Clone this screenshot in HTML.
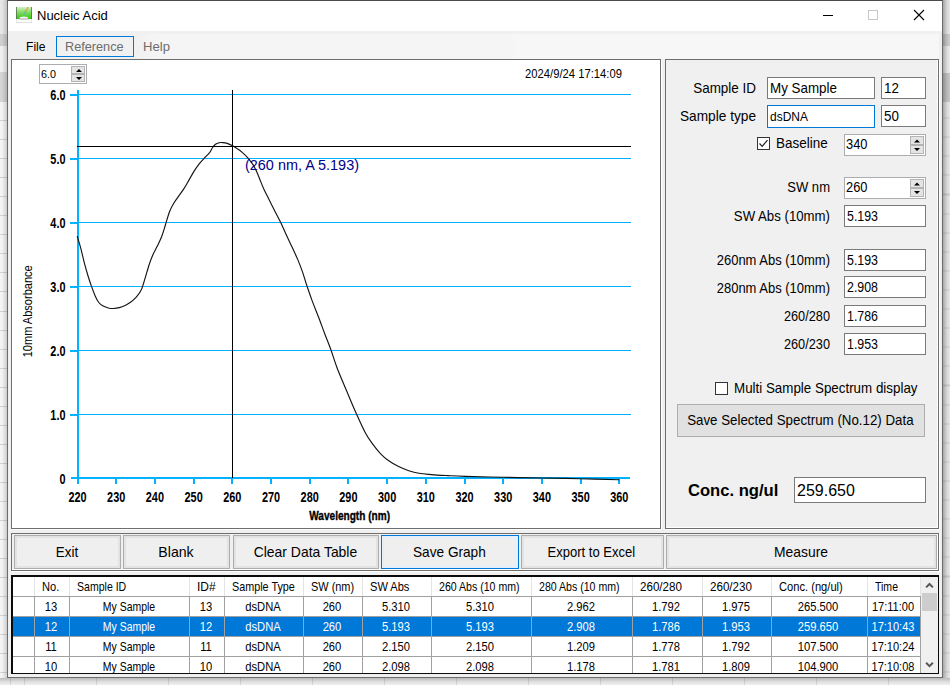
<!DOCTYPE html>
<html><head><meta charset="utf-8">
<style>
*{box-sizing:border-box;margin:0;padding:0}
html,body{width:950px;height:685px;overflow:hidden;background:#ececec;font-family:"Liberation Sans",sans-serif;color:#000}
.abs{position:absolute}
#bg{left:0;top:0;width:950px;height:685px;background:#ececec}
#bgl{left:0;top:0;width:7px;height:685px;background:
 linear-gradient(to right,rgba(0,0,0,0) 0,rgba(0,0,0,0) 2px,rgba(0,0,0,.16) 7px),
 linear-gradient(to bottom,#e6e6e6 0,#e6e6e6 34px,#cfcfcf 34px,#cfcfcf 46px,#f0f0f0 46px,#f0f0f0 72px,#d4d4d4 72px,#d4d4d4 101px,rgba(0,0,0,0) 101px),
 repeating-linear-gradient(to bottom,#d2d2d2 0,#d2d2d2 1px,#f4f4f4 1px,#f4f4f4 19.05px)}
#bgl{background-position:0 0,0 0,0 101px;background-repeat:no-repeat,no-repeat,repeat}
#bgr{left:943px;top:0;width:7px;height:685px;background:
 linear-gradient(to right,rgba(0,0,0,.28) 0,rgba(0,0,0,.08) 4px,rgba(0,0,0,0) 7px),
 linear-gradient(to bottom,#e8e8e8 0,#e8e8e8 34px,#cdcdcd 34px,#cdcdcd 46px,#ececec 46px,#ececec 73px,#c8c8c8 73px,#c8c8c8 102px,rgba(0,0,0,0) 102px),
 repeating-linear-gradient(to bottom,#cfcfcf 0,#cfcfcf 1px,#e9e9e9 1px,#e9e9e9 19.1px)}
#bgr{background-position:0 0,0 0,0 98.5px;background-repeat:no-repeat,no-repeat,repeat}
#bgb{left:0;top:678px;width:950px;height:7px;background:
 linear-gradient(to bottom,rgba(0,0,0,.22) 0,rgba(0,0,0,.06) 4px,rgba(0,0,0,0) 7px),
 repeating-linear-gradient(to right,#d6d6d6 0,#d6d6d6 1px,#efefef 1px,#efefef 72px)}
#bgb{background-position:0 0,24px 0}
#win{left:7px;top:0;width:936px;height:678px;background:#f0f0f0;border:1px solid #6b6b6b;border-top-color:#4a4a4a}
#title{left:8px;top:1px;width:934px;height:30px;background:#fff}
#menubar{left:8px;top:31px;width:934px;height:28px;background:#f0f0f0}
#menubar2{left:8px;top:34px;width:931px;height:25px;background:linear-gradient(to right,#f0f0f0 0,#f0f0f0 125px,#f5f5f5 150px,#f5f5f5 500px,#f7f7f7 510px,#f7f7f7 100%)}
.t{position:absolute;white-space:pre;line-height:1}
.panel{position:absolute;border:1px solid #6e6e6e;box-shadow:inset -1px -1px 0 #fff, 1px 1px 0 #fff}
.inp{position:absolute;background:#fff;border:1px solid #7a7a7a;font-size:14.4px;height:22px;line-height:20px;padding-left:2px;white-space:pre}
.inp span{display:inline-block;transform:scaleX(.93);transform-origin:0 50%}
.lbl{position:absolute;font-size:14.4px;white-space:pre;text-align:right;line-height:16px;transform:scaleX(.935);transform-origin:100% 50%}
.lbl.l{text-align:left;transform-origin:0 50%}
.btn{position:absolute;background:#efefef;border:1px solid #adadad;box-shadow:inset 0 0 0 2px #e3e3e3;font-size:14.4px;text-align:center;white-space:pre}
.btn span{display:inline-block;position:relative;left:-0.7px}
.spin{position:absolute;background:#fff;border:1px solid #abadb3}
.spin .b{position:absolute;right:1px;width:14px;background:#e4e4e4;border:1px solid #b4b4b4}
.cb{position:absolute;width:13px;height:13px;background:#fff;border:1px solid #333}
.tt{position:absolute;white-space:pre;font-size:12.6px;line-height:16px;height:16px;display:block}
</style></head><body>
<div id="bg" class="abs"></div>
<div id="bgl" class="abs"></div>
<div id="bgr" class="abs"></div>
<div id="bgb" class="abs"></div>
<div id="win" class="abs"></div>
<div id="title" class="abs"></div>
<div id="menubar" class="abs"></div>
<div id="menubar2" class="abs"></div>

<!-- title -->
<svg class="abs" style="left:16px;top:7px" width="16" height="16" viewBox="0 0 16 16">
 <defs><linearGradient id="g1" x1="0" y1="0" x2="0" y2="1"><stop offset="0" stop-color="#d6f2c9"/><stop offset="0.45" stop-color="#7fdc5c"/><stop offset="1" stop-color="#35c416"/></linearGradient></defs>
 <rect x="0" y="0" width="16" height="16" fill="#dcdcdc"/>
 <rect x="0" y="0" width="16" height="12" fill="#5a6a5a"/>
 <rect x="0.8" y="0" width="14.4" height="12" fill="url(#g1)"/>
 <rect x="0.6" y="12.4" width="14.8" height="2.8" fill="#fbfbfb"/>
 <ellipse cx="7.8" cy="11.4" rx="4.4" ry="1.9" fill="#f4f4f4"/>
 <path d="M3.4 12 H12.2" stroke="#8a8a8a" stroke-width="0.7"/>
 <path d="M7.4 8.6 L9 5" stroke="#4cc0cf" stroke-width="1.1"/>
 <path d="M9 5 L12.3 0.4" stroke="#e88a2e" stroke-width="1.3" stroke-dasharray="1.6 0.6"/>
</svg>
<div class="t" style="left:37px;top:9px;font-size:13px">Nucleic Acid</div>
<svg class="abs" style="left:815px;top:5px" width="120" height="22" viewBox="0 0 120 22">
 <path d="M8 10.5 H18" stroke="#000" stroke-width="1"/>
 <rect x="53.5" y="5.5" width="9" height="9" fill="none" stroke="#c8c8c8" stroke-width="1"/>
 <path d="M99 5 L109 15 M109 5 L99 15" stroke="#000" stroke-width="1.1"/>
</svg>

<!-- menu -->
<div class="t" style="left:26px;top:41px;font-size:12.1px">File</div>
<div class="abs" style="left:56px;top:36px;width:78px;height:21px;border:1px solid #0078d7;background:#f1f1f1"></div>
<div class="t" style="left:65px;top:41px;font-size:12.7px;color:#6d6d6d">Reference</div>
<div class="t" style="left:143px;top:40px;font-size:13.1px;color:#6d6d6d">Help</div>

<!-- chart panel -->
<div class="panel" style="left:11px;top:59px;width:650px;height:470px;background:#fff"></div>
<div class="spin" style="left:39px;top:64px;width:48px;height:20px">
 <div class="t" style="left:1px;top:2.5px;font-size:11.6px;transform:scaleX(.93);transform-origin:0 50%">6.0</div>
 <div class="b" style="top:1px;height:8px"></div><div class="b" style="top:9px;height:8px"></div>
 <svg class="abs" style="left:32px;top:1px" width="14" height="17" viewBox="0 0 14 17"><path d="M4 6 L7 3 L10 6 Z M4 11 L7 14 L10 11 Z" fill="#000"/></svg>
</div>
<div class="t" style="left:525px;top:67.5px;font-size:12.6px;transform:scaleX(.893);transform-origin:0 50%">2024/9/24 17:14:09</div>

<svg class="abs" style="left:12px;top:60px" width="648" height="468" viewBox="12 60 648 468">
<g fill="#00b2ff" shape-rendering="crispEdges">
<rect x="77" y="94" width="554" height="1"/>
<rect x="70" y="94" width="7" height="2"/>
<rect x="77" y="158" width="554" height="1"/>
<rect x="70" y="158" width="7" height="2"/>
<rect x="77" y="222" width="554" height="1"/>
<rect x="70" y="222" width="7" height="2"/>
<rect x="77" y="286" width="554" height="1"/>
<rect x="70" y="286" width="7" height="2"/>
<rect x="77" y="350" width="554" height="1"/>
<rect x="70" y="350" width="7" height="2"/>
<rect x="77" y="414" width="554" height="1"/>
<rect x="70" y="414" width="7" height="2"/>
<rect x="77" y="90" width="2" height="394"/>
<rect x="71" y="477" width="559" height="2"/>
<rect x="115" y="477" width="2" height="7"/>
<rect x="154" y="477" width="2" height="7"/>
<rect x="193" y="477" width="2" height="7"/>
<rect x="231" y="477" width="2" height="7"/>
<rect x="270" y="477" width="2" height="7"/>
<rect x="309" y="477" width="2" height="7"/>
<rect x="347" y="477" width="2" height="7"/>
<rect x="386" y="477" width="2" height="7"/>
<rect x="425" y="477" width="2" height="7"/>
<rect x="464" y="477" width="2" height="7"/>
<rect x="502" y="477" width="2" height="7"/>
<rect x="541" y="477" width="2" height="7"/>
<rect x="580" y="477" width="2" height="7"/>
<rect x="618" y="477" width="2" height="7"/>
</g>
<path id="curve" d="M77.2 236.1 C77.8 238.0 79.4 243.3 80.6 247.7 C81.8 252.1 83.0 257.7 84.2 262.3 C85.4 266.9 86.7 271.5 87.9 275.5 C89.1 279.5 90.3 283.0 91.5 286.4 C92.7 289.8 94.0 293.2 95.2 295.9 C96.4 298.6 97.5 300.8 98.8 302.5 C100.1 304.2 101.6 305.2 103.2 306.1 C104.8 307.0 106.6 307.6 108.3 308.0 C110.0 308.4 111.6 308.6 113.4 308.5 C115.2 308.4 117.3 308.1 119.3 307.6 C121.2 307.1 123.2 306.3 125.1 305.4 C127.0 304.5 129.1 303.3 130.9 302.0 C132.7 300.7 134.4 299.1 136.0 297.4 C137.6 295.6 139.3 293.3 140.4 291.5 C141.5 289.7 141.8 288.8 142.6 286.4 C143.4 284.0 144.4 280.5 145.5 276.9 C146.6 273.2 148.0 268.1 149.2 264.5 C150.4 260.9 151.5 258.0 152.8 255.0 C154.1 252.0 155.7 249.3 157.2 246.3 C158.7 243.3 160.2 240.4 161.6 236.8 C163.0 233.2 164.1 229.2 165.4 225.0 C166.7 220.8 168.1 215.5 169.5 211.8 C170.9 208.1 172.3 205.7 173.9 203.0 C175.5 200.3 177.3 198.1 179.0 195.7 C180.7 193.3 182.4 191.1 184.1 188.4 C185.8 185.7 187.5 182.5 189.2 179.6 C190.9 176.7 192.6 173.6 194.3 170.9 C196.0 168.2 197.7 165.8 199.4 163.6 C201.1 161.4 202.8 159.8 204.5 158.0 C206.2 156.2 208.2 154.3 209.6 152.6 C210.9 150.8 211.6 148.9 212.6 147.5 C213.6 146.1 214.4 145.1 215.5 144.3 C216.6 143.5 217.9 143.1 219.1 142.8 C220.3 142.5 221.5 142.5 222.8 142.6 C224.2 142.7 225.6 142.9 227.2 143.4 C228.8 143.9 230.9 144.9 232.6 145.8 C234.3 146.7 235.8 147.6 237.4 148.7 C239.1 149.8 240.8 151.1 242.5 152.6 C244.2 154.1 245.9 155.7 247.6 157.7 C249.3 159.7 251.3 162.1 252.8 164.4 C254.3 166.7 255.3 168.7 256.5 171.3 C257.7 173.9 258.9 177.0 260.1 180.0 C261.3 183.0 262.4 186.0 263.9 189.2 C265.4 192.4 267.2 195.8 269.0 199.4 C270.8 203.1 272.9 207.2 274.8 211.1 C276.8 214.9 278.8 218.5 280.7 222.5 C282.6 226.5 284.6 231.0 286.5 235.2 C288.4 239.4 290.4 243.4 292.3 247.6 C294.2 251.8 296.3 256.1 298.0 260.1 C299.7 264.2 301.0 267.6 302.5 271.9 C304.0 276.2 305.3 281.1 306.9 285.8 C308.5 290.6 310.1 295.2 312.0 300.4 C313.9 305.6 316.4 311.5 318.6 317.2 C320.8 322.9 323.0 329.2 325.1 334.7 C327.2 340.2 329.0 344.4 331.0 350.0 C333.0 355.6 334.6 361.3 337.3 368.5 C340.1 375.7 344.3 385.3 347.5 393.0 C350.7 400.7 353.8 408.0 356.7 414.5 C359.6 421.0 362.3 427.1 364.9 431.9 C367.4 436.7 369.4 439.5 372.0 443.1 C374.6 446.7 377.5 450.4 380.2 453.3 C382.9 456.2 385.3 458.3 388.4 460.5 C391.5 462.7 395.2 464.9 398.6 466.6 C402.0 468.3 405.4 469.6 408.8 470.7 C412.2 471.8 415.2 472.6 419.0 473.3 C422.8 474.0 426.5 474.2 431.3 474.6 C436.1 475.0 442.0 475.3 447.6 475.6 C453.2 475.9 455.8 476.1 465.0 476.4 C474.2 476.7 490.3 477.0 503.0 477.3 C515.7 477.6 528.2 477.8 541.0 478.0 C553.8 478.2 567.0 478.4 580.0 478.7 C593.0 479.0 612.8 479.5 619.3 479.7" fill="none" stroke="#141414" stroke-width="1.15" stroke-linejoin="round"/>
<rect x="232" y="90" width="1" height="388" fill="#000" shape-rendering="crispEdges"/>
<rect x="77" y="146" width="554" height="1" fill="#000" shape-rendering="crispEdges"/>
<g font-family="Liberation Sans" font-weight="700" font-size="14" fill="#000">
<text transform="translate(65.5 99.5) scale(0.78 1.06)" text-anchor="end">6.0</text>
<text transform="translate(65.5 163.5) scale(0.78 1.06)" text-anchor="end">5.0</text>
<text transform="translate(65.5 227.5) scale(0.78 1.06)" text-anchor="end">4.0</text>
<text transform="translate(65.5 291.5) scale(0.78 1.06)" text-anchor="end">3.0</text>
<text transform="translate(65.5 355.5) scale(0.78 1.06)" text-anchor="end">2.0</text>
<text transform="translate(65.5 419.5) scale(0.78 1.06)" text-anchor="end">1.0</text>
<text transform="translate(65.5 483.5) scale(0.78 1.06)" text-anchor="end">0</text>
<text transform="translate(77.5 501.5) scale(0.78 1.06)" text-anchor="middle">220</text>
<text transform="translate(116.2 501.5) scale(0.78 1.06)" text-anchor="middle">230</text>
<text transform="translate(154.9 501.5) scale(0.78 1.06)" text-anchor="middle">240</text>
<text transform="translate(193.6 501.5) scale(0.78 1.06)" text-anchor="middle">250</text>
<text transform="translate(232.3 501.5) scale(0.78 1.06)" text-anchor="middle">260</text>
<text transform="translate(271.0 501.5) scale(0.78 1.06)" text-anchor="middle">270</text>
<text transform="translate(309.7 501.5) scale(0.78 1.06)" text-anchor="middle">280</text>
<text transform="translate(348.4 501.5) scale(0.78 1.06)" text-anchor="middle">290</text>
<text transform="translate(387.1 501.5) scale(0.78 1.06)" text-anchor="middle">300</text>
<text transform="translate(425.8 501.5) scale(0.78 1.06)" text-anchor="middle">310</text>
<text transform="translate(464.5 501.5) scale(0.78 1.06)" text-anchor="middle">320</text>
<text transform="translate(503.2 501.5) scale(0.78 1.06)" text-anchor="middle">330</text>
<text transform="translate(541.9 501.5) scale(0.78 1.06)" text-anchor="middle">340</text>
<text transform="translate(580.6 501.5) scale(0.78 1.06)" text-anchor="middle">350</text>
<text transform="translate(619.3 501.5) scale(0.78 1.06)" text-anchor="middle">360</text>
</g>
<text transform="translate(349.6 519.6) scale(0.84 1)" font-family="Liberation Sans" font-weight="700" font-size="12" text-anchor="middle" stroke="#000" stroke-width="0.35">Wavelength (nm)</text>
<text transform="translate(32.2 311.3) rotate(-90) scale(0.85 1)" font-family="Liberation Sans" font-size="13" text-anchor="middle">10mm Absorbance</text>
<text x="245" y="170" font-family="Liberation Sans" font-size="14.45" fill="#00008b">(260 nm, A 5.193)</text>
</svg>

<!-- right panel -->
<div class="panel" style="left:665px;top:59px;width:274px;height:470px;background:#f0f0f0"></div>
<div class="lbl" style="left:600px;width:156px;top:80px">Sample ID</div>
<div class="inp" style="left:767px;top:77px;width:108px"><span>My Sample</span></div>
<div class="inp" style="left:881px;top:77px;width:45px"><span>12</span></div>
<div class="lbl" style="left:600px;width:156px;top:108px;transform:scaleX(0.95)">Sample type</div>
<div class="inp" style="left:767px;top:105px;width:108px;height:23px;border-color:#0078d7"><span style="font-size:13.3px;transform:scaleX(.9)">dsDNA</span></div>
<div class="inp" style="left:881px;top:105px;width:45px"><span>50</span></div>
<div class="cb" style="left:757px;top:137px"><svg width="11" height="11" viewBox="0 0 11 11" style="position:absolute;left:0;top:0"><path d="M1.5 5.5 L4.2 8.3 L9.5 2.2" fill="none" stroke="#222" stroke-width="1.2"/></svg></div>
<div class="lbl l" style="left:776px;top:135px">Baseline</div>
<div class="spin" style="left:844px;top:134px;width:82px;height:22px">
 <div class="t" style="left:1px;top:2px;font-size:14.2px;transform:scaleX(.905);transform-origin:0 50%">340</div>
 <div class="b" style="top:1px;height:9px"></div><div class="b" style="top:10px;height:9px"></div>
 <svg class="abs" style="left:65px;top:1px" width="14" height="19" viewBox="0 0 14 19"><path d="M4 6.5 L7 3.5 L10 6.5 Z M4 12 L7 15 L10 12 Z" fill="#000"/></svg>
</div>
<div class="lbl" style="left:674px;width:156px;top:179px;transform:scaleX(0.907)">SW nm</div>
<div class="spin" style="left:844px;top:177px;width:82px;height:22px">
 <div class="t" style="left:1px;top:2px;font-size:14.2px;transform:scaleX(.905);transform-origin:0 50%">260</div>
 <div class="b" style="top:1px;height:9px"></div><div class="b" style="top:10px;height:9px"></div>
 <svg class="abs" style="left:65px;top:1px" width="14" height="19" viewBox="0 0 14 19"><path d="M4 6.5 L7 3.5 L10 6.5 Z M4 12 L7 15 L10 12 Z" fill="#000"/></svg>
</div>
<div class="lbl" style="left:674px;width:156px;top:208px;transform:scaleX(0.918)">SW Abs (10mm)</div>
<div class="inp" style="left:844px;top:205px;width:82px"><span style="transform:scaleX(.86)">5.193</span></div>
<div class="lbl" style="left:674px;width:156px;top:252px;transform:scaleX(0.902)">260nm Abs (10mm)</div>
<div class="inp" style="left:844px;top:249px;width:82px"><span style="transform:scaleX(.86)">5.193</span></div>
<div class="lbl" style="left:674px;width:156px;top:280px;transform:scaleX(0.902)">280nm Abs (10mm)</div>
<div class="inp" style="left:844px;top:276px;width:82px"><span style="transform:scaleX(.86)">2.908</span></div>
<div class="lbl" style="left:674px;width:156px;top:308px;transform:scaleX(0.886)">260/280</div>
<div class="inp" style="left:844px;top:305px;width:82px"><span style="transform:scaleX(.86)">1.786</span></div>
<div class="lbl" style="left:674px;width:156px;top:336px;transform:scaleX(0.886)">260/230</div>
<div class="inp" style="left:844px;top:333px;width:82px"><span style="transform:scaleX(.86)">1.953</span></div>
<div class="cb" style="left:715px;top:382px"></div>
<div class="lbl l" style="left:734px;top:380px;transform:scaleX(0.929)">Multi Sample Spectrum display</div>
<div class="btn" style="left:677px;top:404px;width:248px;height:33px;line-height:31px;background:#e1e1e1;box-shadow:none"><span style="transform:scaleX(0.925)">Save Selected Spectrum (No.12) Data</span></div>
<div class="t" style="left:688px;top:483px;font-size:16.6px;font-weight:700">Conc. ng/ul</div>
<div class="inp" style="left:794px;top:477px;width:132px;height:26px;line-height:24px;font-size:16px"><span style="transform:none;position:relative;top:1px">259.650</span></div>

<!-- button row -->
<div class="panel" style="left:11px;top:533px;width:928px;height:38px;background:#f0f0f0"></div>
<div class="btn" style="left:14px;top:535px;width:107px;height:34px;line-height:32px"><span style="transform:scaleX(.93)">Exit</span></div>
<div class="btn" style="left:123px;top:535px;width:107px;height:34px;line-height:32px"><span style="transform:scaleX(0.98)">Blank</span></div>
<div class="btn" style="left:233px;top:535px;width:146px;height:34px;line-height:32px"><span style="transform:scaleX(0.968)">Clear Data Table</span></div>
<div class="btn" style="left:381px;top:535px;width:138px;height:34px;line-height:32px;border-color:#0078d7;box-shadow:inset 0 0 0 2px #e3effa"><span style="transform:scaleX(0.948)">Save Graph</span></div>
<div class="btn" style="left:521px;top:535px;width:143px;height:34px;line-height:32px"><span style="transform:scaleX(.905);left:-1.6px">Export to Excel</span></div>
<div class="btn" style="left:666px;top:535px;width:271px;height:34px;line-height:32px"><span style="transform:scaleX(0.964)">Measure</span></div>

<!-- table -->
<div id="tbl" class="abs" style="left:11px;top:575px;width:928px;height:99px;background:#fff;border:solid #0a0a0a;border-width:2px 1px 1px 2px;overflow:hidden">
<div class="abs" style="left:0;top:40px;width:908px;height:19px;background:#0078d7"></div>
<div class="abs" style="left:0;top:19px;width:908px;height:1px;background:#a0a0a0"></div>
<div class="abs" style="left:0;top:39px;width:908px;height:1px;background:#a0a0a0"></div>
<div class="abs" style="left:0;top:59px;width:908px;height:1px;background:#a0a0a0"></div>
<div class="abs" style="left:0;top:79px;width:908px;height:1px;background:#a0a0a0"></div>
<div class="abs" style="left:21px;top:0;width:1px;height:19px;background:#e3e3e3"></div>
<div class="abs" style="left:21px;top:19px;width:1px;height:80px;background:#a0a0a0"></div>
<div class="abs" style="left:56px;top:0;width:1px;height:19px;background:#e3e3e3"></div>
<div class="abs" style="left:56px;top:19px;width:1px;height:80px;background:#a0a0a0"></div>
<div class="abs" style="left:176px;top:0;width:1px;height:19px;background:#e3e3e3"></div>
<div class="abs" style="left:176px;top:19px;width:1px;height:80px;background:#a0a0a0"></div>
<div class="abs" style="left:211px;top:0;width:1px;height:19px;background:#e3e3e3"></div>
<div class="abs" style="left:211px;top:19px;width:1px;height:80px;background:#a0a0a0"></div>
<div class="abs" style="left:290px;top:0;width:1px;height:19px;background:#e3e3e3"></div>
<div class="abs" style="left:290px;top:19px;width:1px;height:80px;background:#a0a0a0"></div>
<div class="abs" style="left:349px;top:0;width:1px;height:19px;background:#e3e3e3"></div>
<div class="abs" style="left:349px;top:19px;width:1px;height:80px;background:#a0a0a0"></div>
<div class="abs" style="left:418px;top:0;width:1px;height:19px;background:#e3e3e3"></div>
<div class="abs" style="left:418px;top:19px;width:1px;height:80px;background:#a0a0a0"></div>
<div class="abs" style="left:518px;top:0;width:1px;height:19px;background:#e3e3e3"></div>
<div class="abs" style="left:518px;top:19px;width:1px;height:80px;background:#a0a0a0"></div>
<div class="abs" style="left:619px;top:0;width:1px;height:19px;background:#e3e3e3"></div>
<div class="abs" style="left:619px;top:19px;width:1px;height:80px;background:#a0a0a0"></div>
<div class="abs" style="left:689px;top:0;width:1px;height:19px;background:#e3e3e3"></div>
<div class="abs" style="left:689px;top:19px;width:1px;height:80px;background:#a0a0a0"></div>
<div class="abs" style="left:758px;top:0;width:1px;height:19px;background:#e3e3e3"></div>
<div class="abs" style="left:758px;top:19px;width:1px;height:80px;background:#a0a0a0"></div>
<div class="abs" style="left:854px;top:0;width:1px;height:19px;background:#e3e3e3"></div>
<div class="abs" style="left:854px;top:19px;width:1px;height:80px;background:#a0a0a0"></div>
<div class="abs" style="left:907px;top:0;width:1px;height:19px;background:#e3e3e3"></div>
<div class="abs" style="left:907px;top:19px;width:1px;height:80px;background:#a0a0a0"></div>
<span class="tt" style="left:29.2px;top:1.7px;color:#000;transform:scaleX(0.88);transform-origin:0 50%">No.</span>
<span class="tt" style="left:64.2px;top:1.7px;color:#000;transform:scaleX(0.837);transform-origin:0 50%">Sample ID</span>
<span class="tt" style="left:184.2px;top:1.7px;color:#000;transform:scaleX(0.95);transform-origin:0 50%">ID#</span>
<span class="tt" style="left:219.2px;top:1.7px;color:#000;transform:scaleX(0.857);transform-origin:0 50%">Sample Type</span>
<span class="tt" style="left:297.9px;top:1.7px;color:#000;transform:scaleX(0.868);transform-origin:0 50%">SW (nm)</span>
<span class="tt" style="left:357.0px;top:1.7px;color:#000;transform:scaleX(0.88);transform-origin:0 50%">SW Abs</span>
<span class="tt" style="left:426.0px;top:1.7px;color:#000;transform:scaleX(0.84);transform-origin:0 50%">260 Abs (10 mm)</span>
<span class="tt" style="left:525.9px;top:1.7px;color:#000;transform:scaleX(0.84);transform-origin:0 50%">280 Abs (10 mm)</span>
<span class="tt" style="left:627.1px;top:1.7px;color:#000;transform:scaleX(0.922);transform-origin:0 50%">260/280</span>
<span class="tt" style="left:697.0px;top:1.7px;color:#000;transform:scaleX(0.922);transform-origin:0 50%">260/230</span>
<span class="tt" style="left:766.1px;top:1.7px;color:#000;transform:scaleX(0.885);transform-origin:0 50%">Conc. (ng/ul)</span>
<span class="tt" style="left:862.0px;top:1.7px;color:#000;transform:scaleX(0.835);transform-origin:0 50%">Time</span>
<span class="tt" style="left:-62.0px;top:21.7px;width:200px;text-align:center;color:#000;transform:scaleX(0.89);transform-origin:50% 50%">13</span>
<span class="tt" style="left:15.5px;top:21.7px;width:200px;text-align:center;color:#000;transform:scaleX(0.83);transform-origin:50% 50%">My Sample</span>
<span class="tt" style="left:93.0px;top:21.7px;width:200px;text-align:center;color:#000;transform:scaleX(0.89);transform-origin:50% 50%">13</span>
<span class="tt" style="left:149.9px;top:21.7px;width:200px;text-align:center;color:#000;transform:scaleX(0.89);transform-origin:50% 50%">dsDNA</span>
<span class="tt" style="left:218.8px;top:21.7px;width:200px;text-align:center;color:#000;transform:scaleX(0.89);transform-origin:50% 50%">260</span>
<span class="tt" style="left:282.8px;top:21.7px;width:200px;text-align:center;color:#000;transform:scaleX(0.89);transform-origin:50% 50%">5.310</span>
<span class="tt" style="left:367.2px;top:21.7px;width:200px;text-align:center;color:#000;transform:scaleX(0.89);transform-origin:50% 50%">5.310</span>
<span class="tt" style="left:467.8px;top:21.7px;width:200px;text-align:center;color:#000;transform:scaleX(0.89);transform-origin:50% 50%">2.962</span>
<span class="tt" style="left:553.3px;top:21.7px;width:200px;text-align:center;color:#000;transform:scaleX(0.89);transform-origin:50% 50%">1.792</span>
<span class="tt" style="left:622.8px;top:21.7px;width:200px;text-align:center;color:#000;transform:scaleX(0.89);transform-origin:50% 50%">1.975</span>
<span class="tt" style="left:705.3px;top:21.7px;width:200px;text-align:center;color:#000;transform:scaleX(0.89);transform-origin:50% 50%">265.500</span>
<span class="tt" style="left:780.0px;top:21.7px;width:200px;text-align:center;color:#000;transform:scaleX(0.875);transform-origin:50% 50%">17:11:00</span>
<span class="tt" style="left:-62.0px;top:41.7px;width:200px;text-align:center;color:#fff;transform:scaleX(0.89);transform-origin:50% 50%">12</span>
<span class="tt" style="left:15.5px;top:41.7px;width:200px;text-align:center;color:#fff;transform:scaleX(0.83);transform-origin:50% 50%">My Sample</span>
<span class="tt" style="left:93.0px;top:41.7px;width:200px;text-align:center;color:#fff;transform:scaleX(0.89);transform-origin:50% 50%">12</span>
<span class="tt" style="left:149.9px;top:41.7px;width:200px;text-align:center;color:#fff;transform:scaleX(0.89);transform-origin:50% 50%">dsDNA</span>
<span class="tt" style="left:218.8px;top:41.7px;width:200px;text-align:center;color:#fff;transform:scaleX(0.89);transform-origin:50% 50%">260</span>
<span class="tt" style="left:282.8px;top:41.7px;width:200px;text-align:center;color:#fff;transform:scaleX(0.89);transform-origin:50% 50%">5.193</span>
<span class="tt" style="left:367.2px;top:41.7px;width:200px;text-align:center;color:#fff;transform:scaleX(0.89);transform-origin:50% 50%">5.193</span>
<span class="tt" style="left:467.8px;top:41.7px;width:200px;text-align:center;color:#fff;transform:scaleX(0.89);transform-origin:50% 50%">2.908</span>
<span class="tt" style="left:553.3px;top:41.7px;width:200px;text-align:center;color:#fff;transform:scaleX(0.89);transform-origin:50% 50%">1.786</span>
<span class="tt" style="left:622.8px;top:41.7px;width:200px;text-align:center;color:#fff;transform:scaleX(0.89);transform-origin:50% 50%">1.953</span>
<span class="tt" style="left:705.3px;top:41.7px;width:200px;text-align:center;color:#fff;transform:scaleX(0.89);transform-origin:50% 50%">259.650</span>
<span class="tt" style="left:780.0px;top:41.7px;width:200px;text-align:center;color:#fff;transform:scaleX(0.875);transform-origin:50% 50%">17:10:43</span>
<span class="tt" style="left:-62.0px;top:61.7px;width:200px;text-align:center;color:#000;transform:scaleX(0.89);transform-origin:50% 50%">11</span>
<span class="tt" style="left:15.5px;top:61.7px;width:200px;text-align:center;color:#000;transform:scaleX(0.83);transform-origin:50% 50%">My Sample</span>
<span class="tt" style="left:93.0px;top:61.7px;width:200px;text-align:center;color:#000;transform:scaleX(0.89);transform-origin:50% 50%">11</span>
<span class="tt" style="left:149.9px;top:61.7px;width:200px;text-align:center;color:#000;transform:scaleX(0.89);transform-origin:50% 50%">dsDNA</span>
<span class="tt" style="left:218.8px;top:61.7px;width:200px;text-align:center;color:#000;transform:scaleX(0.89);transform-origin:50% 50%">260</span>
<span class="tt" style="left:282.8px;top:61.7px;width:200px;text-align:center;color:#000;transform:scaleX(0.89);transform-origin:50% 50%">2.150</span>
<span class="tt" style="left:367.2px;top:61.7px;width:200px;text-align:center;color:#000;transform:scaleX(0.89);transform-origin:50% 50%">2.150</span>
<span class="tt" style="left:467.8px;top:61.7px;width:200px;text-align:center;color:#000;transform:scaleX(0.89);transform-origin:50% 50%">1.209</span>
<span class="tt" style="left:553.3px;top:61.7px;width:200px;text-align:center;color:#000;transform:scaleX(0.89);transform-origin:50% 50%">1.778</span>
<span class="tt" style="left:622.8px;top:61.7px;width:200px;text-align:center;color:#000;transform:scaleX(0.89);transform-origin:50% 50%">1.792</span>
<span class="tt" style="left:705.3px;top:61.7px;width:200px;text-align:center;color:#000;transform:scaleX(0.89);transform-origin:50% 50%">107.500</span>
<span class="tt" style="left:780.0px;top:61.7px;width:200px;text-align:center;color:#000;transform:scaleX(0.875);transform-origin:50% 50%">17:10:24</span>
<span class="tt" style="left:-62.0px;top:81.7px;width:200px;text-align:center;color:#000;transform:scaleX(0.89);transform-origin:50% 50%">10</span>
<span class="tt" style="left:15.5px;top:81.7px;width:200px;text-align:center;color:#000;transform:scaleX(0.83);transform-origin:50% 50%">My Sample</span>
<span class="tt" style="left:93.0px;top:81.7px;width:200px;text-align:center;color:#000;transform:scaleX(0.89);transform-origin:50% 50%">10</span>
<span class="tt" style="left:149.9px;top:81.7px;width:200px;text-align:center;color:#000;transform:scaleX(0.89);transform-origin:50% 50%">dsDNA</span>
<span class="tt" style="left:218.8px;top:81.7px;width:200px;text-align:center;color:#000;transform:scaleX(0.89);transform-origin:50% 50%">260</span>
<span class="tt" style="left:282.8px;top:81.7px;width:200px;text-align:center;color:#000;transform:scaleX(0.89);transform-origin:50% 50%">2.098</span>
<span class="tt" style="left:367.2px;top:81.7px;width:200px;text-align:center;color:#000;transform:scaleX(0.89);transform-origin:50% 50%">2.098</span>
<span class="tt" style="left:467.8px;top:81.7px;width:200px;text-align:center;color:#000;transform:scaleX(0.89);transform-origin:50% 50%">1.178</span>
<span class="tt" style="left:553.3px;top:81.7px;width:200px;text-align:center;color:#000;transform:scaleX(0.89);transform-origin:50% 50%">1.781</span>
<span class="tt" style="left:622.8px;top:81.7px;width:200px;text-align:center;color:#000;transform:scaleX(0.89);transform-origin:50% 50%">1.809</span>
<span class="tt" style="left:705.3px;top:81.7px;width:200px;text-align:center;color:#000;transform:scaleX(0.89);transform-origin:50% 50%">104.900</span>
<span class="tt" style="left:780.0px;top:81.7px;width:200px;text-align:center;color:#000;transform:scaleX(0.875);transform-origin:50% 50%">17:10:08</span>
<div class="abs" style="left:908px;top:0;width:17px;height:96px;background:#f0f0f0"></div>
<div class="abs" style="left:909px;top:16px;width:15px;height:18px;background:#cdcdcd"></div>
<svg class="abs" style="left:908px;top:0" width="17" height="95" viewBox="0 0 17 95"><path d="M5.1 10.4 L8.5 7 L11.9 10.4 M5.1 85.8 L8.5 89.2 L11.9 85.8" fill="none" stroke="#585858" stroke-width="2"/></svg>
</div>
</body></html>
